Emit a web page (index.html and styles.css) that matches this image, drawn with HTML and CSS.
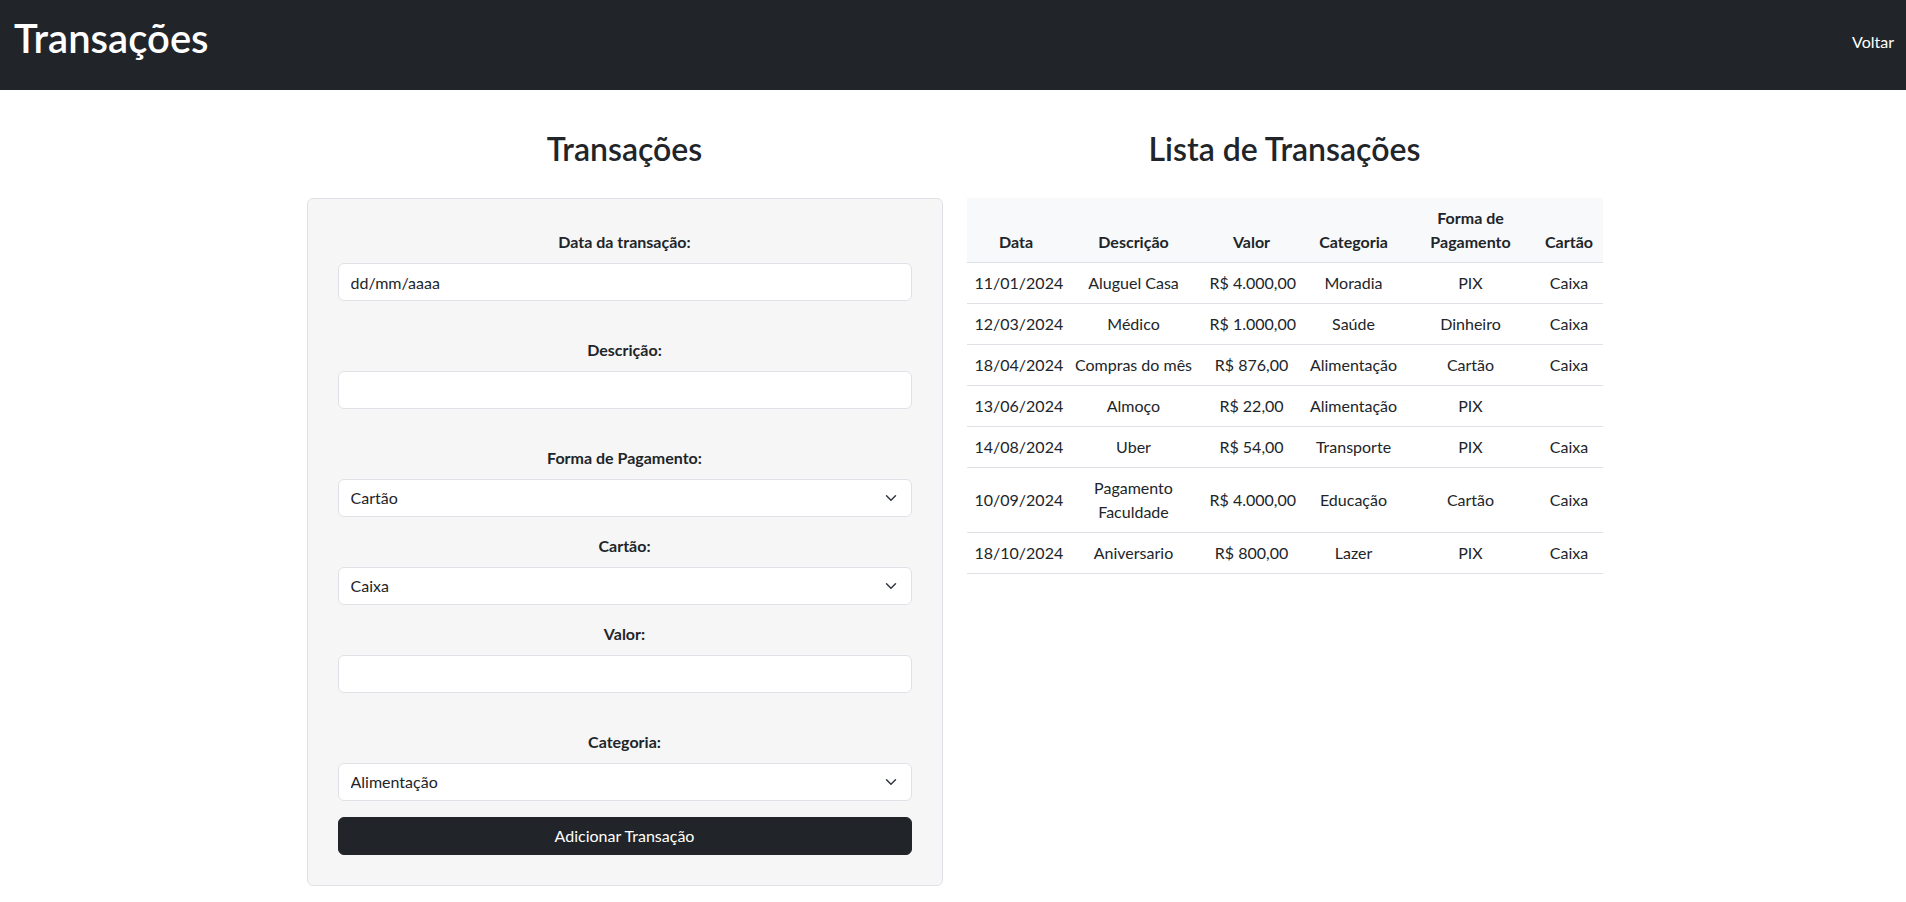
FILE: index.html
```html
<!DOCTYPE html>
<html lang="pt-BR">
<head>
<meta charset="utf-8">
<title>Transações</title>
<link rel="stylesheet" href="styles.css">
</head>
<body>
<header class="navbar">
  <h1 class="brand">Transações</h1>
  <a class="nav-link" href="#">Voltar</a>
</header>
<main class="container">
  <section class="col">
    <h2 class="section-title">Transações</h2>
    <form class="card">
      <div class="group group-input">
        <label class="label">Data da transação:</label>
        <input class="control" type="text" value="dd/mm/aaaa">
      </div>
      <div class="group group-input">
        <label class="label">Descrição:</label>
        <input class="control" type="text">
      </div>
      <div class="group">
        <label class="label">Forma de Pagamento:</label>
        <select class="control select"><option>Cartão</option><option>PIX</option><option>Dinheiro</option></select>
      </div>
      <div class="group">
        <label class="label">Cartão:</label>
        <select class="control select"><option>Caixa</option></select>
      </div>
      <div class="group group-input">
        <label class="label">Valor:</label>
        <input class="control" type="text">
      </div>
      <div class="group">
        <label class="label">Categoria:</label>
        <select class="control select"><option>Alimentação</option><option>Moradia</option><option>Saúde</option></select>
      </div>
      <button class="btn" type="button">Adicionar Transação</button>
    </form>
  </section>
  <section class="col">
    <h2 class="section-title">Lista de Transações</h2>
    <table class="table">
      <thead>
        <tr>
          <th class="c-data">Data</th>
          <th class="c-desc">Descrição</th>
          <th class="c-valor">Valor</th>
          <th class="c-cat">Categoria</th>
          <th class="c-forma">Forma de Pagamento</th>
          <th class="c-cartao">Cartão</th>
        </tr>
      </thead>
      <tbody>
        <tr><td>11/01/2024</td><td>Aluguel Casa</td><td>R$ 4.000,00</td><td>Moradia</td><td>PIX</td><td>Caixa</td></tr>
        <tr><td>12/03/2024</td><td>Médico</td><td>R$ 1.000,00</td><td>Saúde</td><td>Dinheiro</td><td>Caixa</td></tr>
        <tr><td>18/04/2024</td><td>Compras do mês</td><td>R$ 876,00</td><td>Alimentação</td><td>Cartão</td><td>Caixa</td></tr>
        <tr><td>13/06/2024</td><td>Almoço</td><td>R$ 22,00</td><td>Alimentação</td><td>PIX</td><td></td></tr>
        <tr><td>14/08/2024</td><td>Uber</td><td>R$ 54,00</td><td>Transporte</td><td>PIX</td><td>Caixa</td></tr>
        <tr><td>10/09/2024</td><td class="wrap">Pagamento Faculdade</td><td>R$ 4.000,00</td><td>Educação</td><td>Cartão</td><td>Caixa</td></tr>
        <tr><td>18/10/2024</td><td>Aniversario</td><td>R$ 800,00</td><td>Lazer</td><td>PIX</td><td>Caixa</td></tr>
      </tbody>
    </table>
  </section>
</main>
</body>
</html>
```
FILE: styles.css
```css
* { box-sizing: border-box; }

body {
  margin: 0;
  font-family: Lato, "Liberation Sans", sans-serif;
  font-size: 16px;
  line-height: 1.5;
  color: #212529;
  background: #fff;
}

.navbar {
  height: 90px;
  background: #212529;
  display: flex;
  justify-content: space-between;
  align-items: flex-start;
  padding: 0 12px 0 14px;
}

.brand {
  margin: 0;
  padding-top: 14px;
  font-size: 40px;
  line-height: 48px;
  font-weight: 600;
  color: #fff;
}

.nav-link {
  padding-top: 30px;
  color: #fff;
  text-decoration: none;
  font-size: 16px;
  line-height: 24px;
}

.container {
  width: 1301px;
  margin: 0 auto;
  padding: 40px 0 0 4px;
  display: grid;
  grid-template-columns: 636px 636px;
  column-gap: 24px;
  align-items: start;
}

.section-title {
  margin: 0 0 30px;
  text-align: center;
  font-size: 32px;
  line-height: 38.4px;
  font-weight: 600;
}

.card {
  margin: 0;
  background: #f6f6f6;
  border: 1px solid #dee2e6;
  border-radius: 6px;
  padding: 30px 30px 30px;
}

.group { margin-bottom: 16px; }
.group-input { margin-bottom: 36px; }

.label {
  display: block;
  text-align: center;
  font-weight: 700;
  line-height: 26px;
  margin-bottom: 8px;
}

.control {
  display: block;
  width: 100%;
  height: 38px;
  padding: 6px 12px;
  font-family: inherit;
  font-size: 16px;
  line-height: 24px;
  color: #212529;
  background-color: #fff;
  border: 1px solid #dee2e6;
  border-radius: 6px;
  outline: none;
}

.select {
  appearance: none;
  -webkit-appearance: none;
  padding-right: 36px;
  background-image: url("data:image/svg+xml,%3csvg xmlns='http://www.w3.org/2000/svg' viewBox='0 0 16 16'%3e%3cpath fill='none' stroke='%23343a40' stroke-linecap='round' stroke-linejoin='round' stroke-width='2' d='m2 5 6 6 6-6'/%3e%3c/svg%3e");
  background-repeat: no-repeat;
  background-position: right 12px center;
  background-size: 16px 12px;
}

.btn {
  display: block;
  width: 100%;
  height: 38px;
  padding: 6px 12px;
  border: 1px solid #212529;
  border-radius: 6px;
  background: #212529;
  color: #fff;
  font-family: inherit;
  font-size: 16px;
  line-height: 24px;
  text-align: center;
}

.table {
  width: 636px;
  border-collapse: collapse;
  table-layout: fixed;
  color: #212529;
}

.table th,
.table td {
  padding: 8px;
  text-align: center;
  border-bottom: 1px solid #dee2e6;
  line-height: 24px;
  white-space: nowrap;
}

.table th {
  vertical-align: bottom;
  font-weight: 700;
  background: #f8f9fa;
  white-space: normal;
  box-sizing: border-box;
}

.table td { vertical-align: middle; }
.table td.wrap { white-space: normal; }

.c-data { width: 99px; }
.c-desc { width: 136px; }
.c-valor { width: 100px; }
.c-cat { width: 104px; }
.c-forma { width: 130px; }
.c-cartao { width: 67px; }
```
